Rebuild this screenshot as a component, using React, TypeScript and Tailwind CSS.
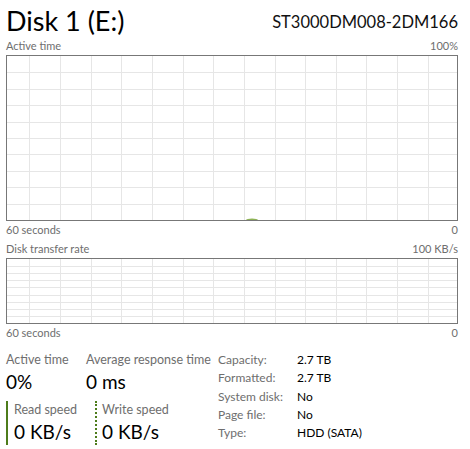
import React from "react";

const FONT = "font-['Lato','Noto_Sans',sans-serif]";

function Grid({ width, height, rows, colStart, colStep }: { width: number; height: number; rows: number; colStart: number; colStep: number }) {
  const cols: number[] = [];
  for (let x = colStart; x < width; x += colStep) cols.push(Math.round(x) + 0.5);
  const rowLines: number[] = [];
  for (let i = 1; i < rows; i++) rowLines.push(Math.round((height * i) / rows) + 0.5);
  return (
    <svg width={width} height={height} className="block">
      {cols.map((x) => (
        <line key={"c" + x} x1={x} y1={0} x2={x} y2={height} stroke="#e6e6e6" strokeWidth={1} />
      ))}
      {rowLines.map((y) => (
        <line key={"r" + y} x1={0} y1={y} x2={width} y2={y} stroke="#e6e6e6" strokeWidth={1} />
      ))}
    </svg>
  );
}

function Stat({ label, value }: { label: string; value: string }) {
  return (
    <div className="flex flex-col whitespace-nowrap">
      <span className="text-[12.5px] leading-[18px] text-[#6e6e6e]">{label}</span>
      <span className="text-[19px] leading-[26px] text-black">{value}</span>
    </div>
  );
}

const props: [string, string][] = [
  ["Capacity:", "2.7 TB"],
  ["Formatted:", "2.7 TB"],
  ["System disk:", "No"],
  ["Page file:", "No"],
  ["Type:", "HDD (SATA)"],
];

export default function App() {
  return (
    <div className={`w-[470px] h-[449px] overflow-hidden bg-white pl-[6px] pr-[12px] ${FONT}`}>
      {/* Header */}
      <div className="flex h-[38px] items-end justify-between whitespace-nowrap">
        <span className="text-[27px] leading-[34px] text-black">Disk 1 (E:)</span>
        <span className="mb-[4px] text-[16.5px] leading-[24px] text-[#111]">ST3000DM008-2DM166</span>
      </div>
      <div className="flex h-[17px] items-center justify-between text-[11px] text-[#6e6e6e]">
        <span>Active time</span>
        <span>100%</span>
      </div>

      {/* Active time chart */}
      <div className="relative h-[166px] w-[452px] border border-[#777777]">
        <Grid width={450} height={164} rows={10} colStart={22.3} colStep={30.65} />
        <svg width="14" height="4" className="absolute left-[238px] bottom-0">
          <ellipse cx="7" cy="4" rx="6" ry="1.5" fill="#8db255" />
        </svg>
      </div>
      <div className="flex h-[19px] items-center justify-between text-[11px] text-[#6e6e6e]">
        <span>60 seconds</span>
        <span>0</span>
      </div>
      <div className="flex h-[18px] items-center justify-between text-[11px] text-[#6e6e6e]">
        <span>Disk transfer rate</span>
        <span>100 KB/s</span>
      </div>

      {/* Transfer rate chart */}
      <div className="h-[66px] w-[452px] border border-[#777777]">
        <Grid width={450} height={64} rows={9} colStart={22.3} colStep={30.65} />
      </div>
      <div className="flex h-[19px] items-center justify-between text-[11px] text-[#6e6e6e]">
        <span>60 seconds</span>
        <span>0</span>
      </div>

      {/* Stats */}
      <div className="flex pt-[8px]">
        <div className="flex w-[212px] flex-col">
          <div className="flex">
            <div className="w-[80px]">
              <Stat label="Active time" value="0%" />
            </div>
            <Stat label="Average response time" value="0 ms" />
          </div>
          <div className="mt-[6px] flex">
            <div className="w-[89px] border-l-2 border-[#4d7c1b] pl-[6px]">
              <Stat label="Read speed" value="0 KB/s" />
            </div>
            <div className="border-l-2 border-dotted border-[#4d7c1b] pl-[5px]">
              <Stat label="Write speed" value="0 KB/s" />
            </div>
          </div>
        </div>
        <div className="flex flex-col whitespace-nowrap text-[12px] leading-[18.3px]">
          {props.map(([k, v]) => (
            <div key={k} className="flex">
              <span className="w-[79px] text-[#6e6e6e]">{k}</span>
              <span className="text-black">{v}</span>
            </div>
          ))}
        </div>
      </div>
    </div>
  );
}
